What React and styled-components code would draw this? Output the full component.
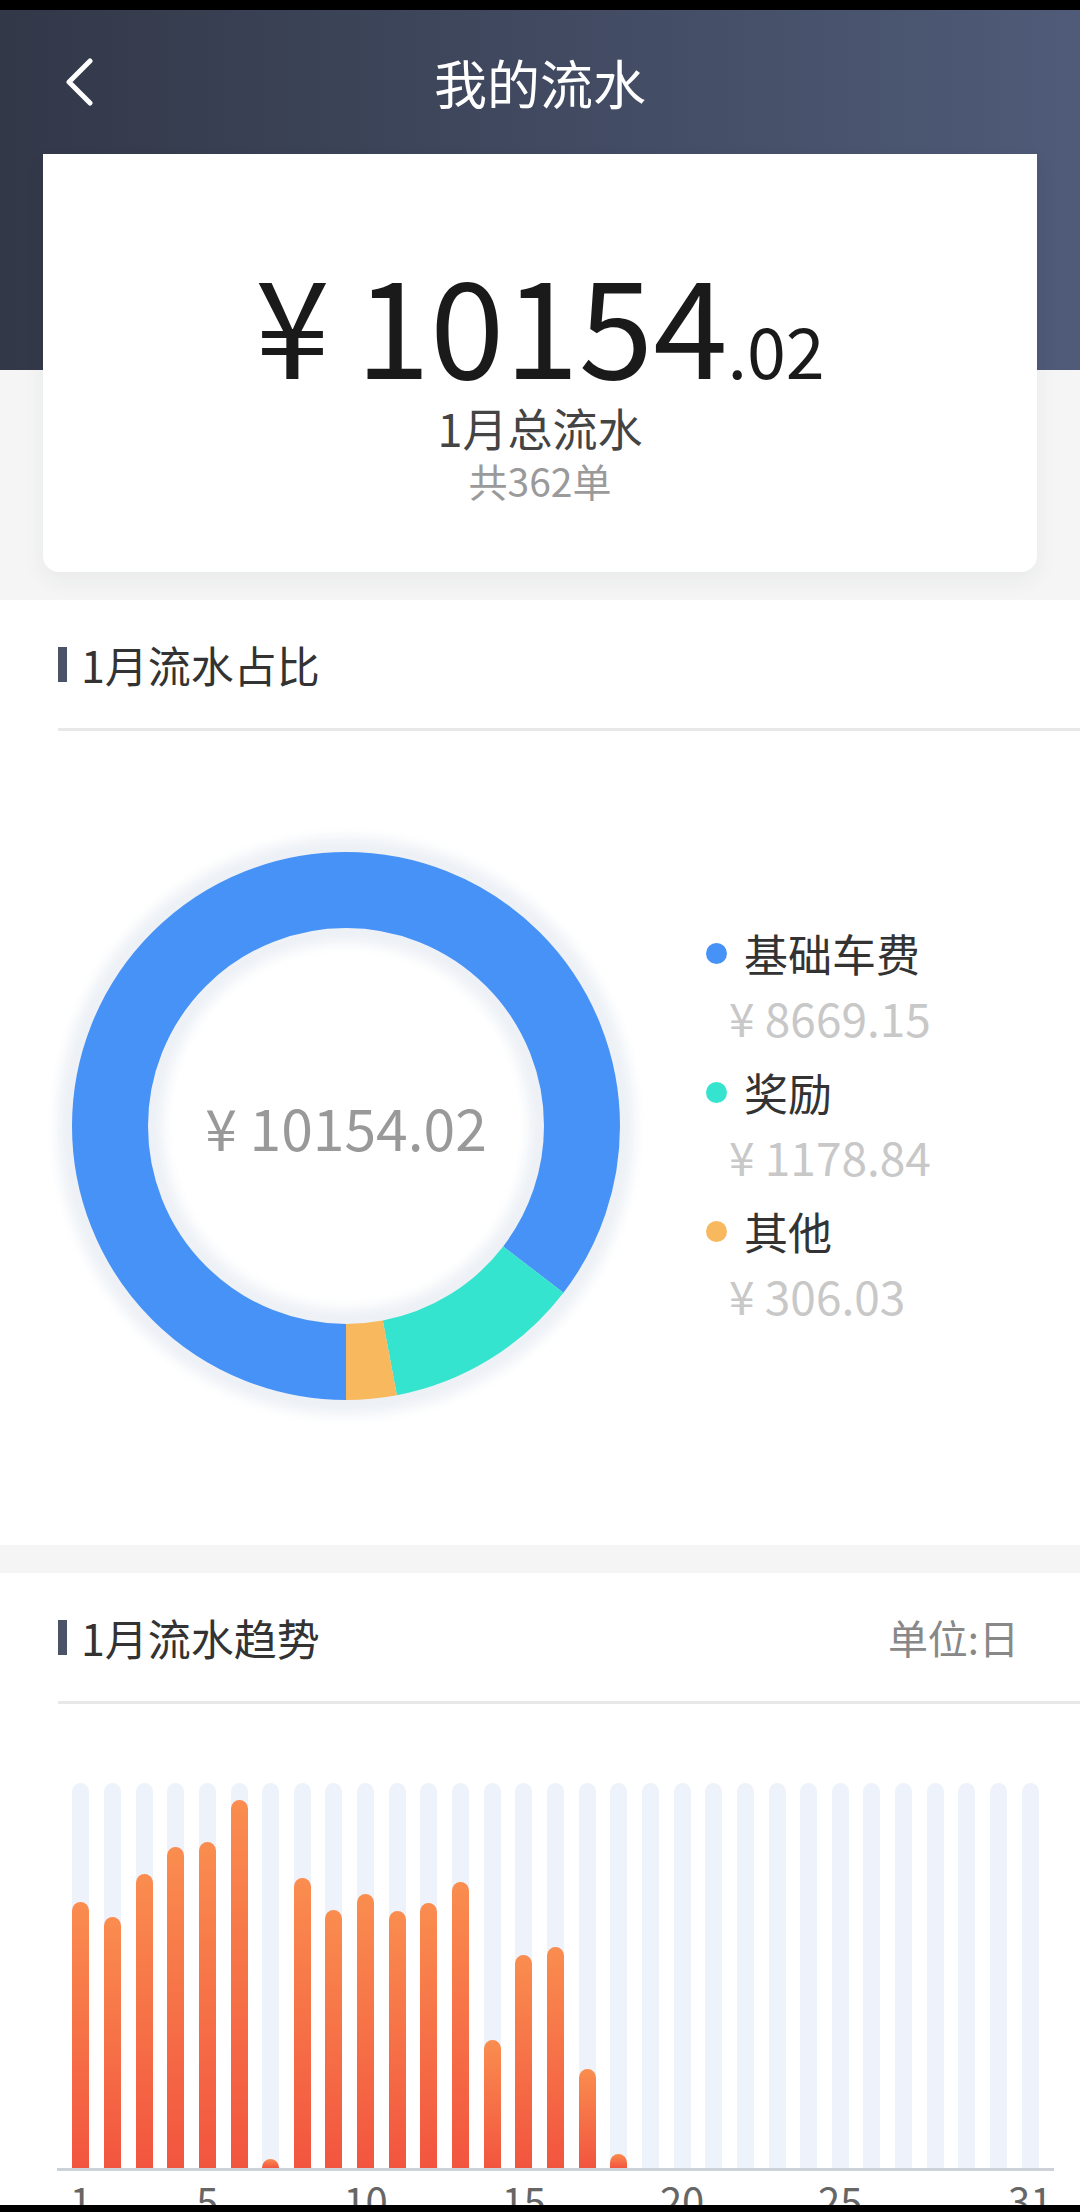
import React from 'react';
import styled, {createGlobalStyle} from 'styled-components';

const GlobalStyle = createGlobalStyle`
	html, body {
		margin: 0;
		padding: 0;
		background: #f5f5f5;
	}
	body {
		font-family: "Noto Sans CJK SC", "Noto Sans", sans-serif;
	}
`;

const Page = styled.div`
	width: 1080px;
	height: 2212px;
	overflow: hidden;
	display: flex;
	flex-direction: column;
	background: #f5f5f5;
`;

const SystemBar = styled.div`
	flex-shrink: 0;
	height: ${props => props.$height}px;
	background: #000;
`;

const Hero = styled.div`
	flex-shrink: 0;
	padding-bottom: 28px;
	background: linear-gradient(90deg, #323848 0%, #4f5b78 100%) top / 100% 360px no-repeat, #f5f5f5;
`;

const NavBar = styled.div`
	height: 144px;
	display: grid;
	grid-template-columns: 160px 1fr 160px;
	align-items: center;
`;

const BackButton = styled.div`
	padding-left: 65px;
	display: flex;
	align-items: center;
`;

const NavTitle = styled.h1`
	margin: 0;
	text-align: center;
	font-size: 53px;
	font-weight: 400;
	line-height: 60px;
	color: #fff;
`;

const SummaryCard = styled.div`
	margin: 0 43px;
	height: 418px;
	box-sizing: border-box;
	padding-top: 97px;
	background: #fff;
	border-radius: 0 0 16px 16px;
	box-shadow: 0 8px 22px rgba(40, 50, 70, 0.06);
	display: flex;
	flex-direction: column;
	align-items: center;
`;

const Amount = styled.div`
	font-size: 134px;
	line-height: 140px;
	height: 140px;
	color: #1a1a1a;
	white-space: nowrap;
`;

const Currency = styled.span`
	margin-right: 26px;
`;

const Decimal = styled.span`
	font-size: 70px;
	line-height: 1;
`;

const CardLabel = styled.div`
	margin-top: 11px;
	font-size: 45px;
	line-height: 52px;
	color: #444;
`;

const CardCount = styled.div`
	font-size: 39px;
	line-height: 52px;
	color: #9a9a9a;
`;

const Section = styled.section`
	flex-shrink: 0;
	height: ${props => props.$height}px;
	margin-top: ${props => props.$gap || 0}px;
	background: #fff;
	overflow: hidden;
`;

const SectionHeader = styled.div`
	margin-left: 58px;
	padding-right: 61px;
	height: 128px;
	display: flex;
	align-items: center;
	justify-content: space-between;
	border-bottom: 3px solid #e8e8e8;
`;

const SectionTitle = styled.h2`
	margin: 0;
	display: flex;
	align-items: center;
	font-size: 43px;
	font-weight: 400;
	line-height: 52px;
	color: #333;

	&::before {
		content: '';
		width: 9px;
		height: 35px;
		margin-right: 14px;
		background: #4a5466;
	}
`;

const Unit = styled.span`
	font-size: 40px;
	color: #888;
`;

const PieBody = styled.div`
	display: flex;
	align-items: center;
	padding: 95px 0 0 46px;
`;

const Donut = styled.div`
	display: grid;
	width: 600px;
	height: 600px;

	& > * {
		grid-area: 1 / 1;
	}
`;

const DonutLabel = styled.div`
	align-self: center;
	justify-self: center;
	font-size: 57px;
	line-height: 80px;
	color: #999;
	white-space: nowrap;
`;

const Legend = styled.ul`
	list-style: none;
	margin: 0 0 0 60px;
	padding: 0;
	display: flex;
	flex-direction: column;
	gap: 11px;
`;

const LegendItem = styled.li`
	display: flex;
	flex-direction: column;
`;

const LegendName = styled.div`
	display: flex;
	align-items: center;
	font-size: 44px;
	line-height: 60px;
	color: #333;

	&::before {
		content: '';
		width: 21px;
		height: 21px;
		border-radius: 50%;
		margin-right: 17px;
		background: ${props => props.$color};
	}
`;

const LegendValue = styled.div`
	padding-left: 23px;
	font-size: 46px;
	line-height: 68px;
	color: #c8c8c8;
`;

const ChartBody = styled.div`
	margin: 79px 26px 0 57px;
`;

const Bars = styled.div`
	height: 385px;
	padding: 0 8px;
	display: grid;
	grid-template-columns: repeat(31, minmax(0, 1fr));
	border-bottom: 3px solid #cdd1d8;
`;

const Track = styled.div`
	justify-self: center;
	width: 17px;
	height: 100%;
	display: flex;
	flex-direction: column;
	justify-content: flex-end;
	overflow: hidden;
	border-radius: 9px 9px 0 0;
	background: #eef3fb;
`;

const Bar = styled.div`
	border-radius: 9px 9px 0 0;
	background: linear-gradient(180deg, #fa8d4f 0%, #f2553f 100%);
`;

const Axis = styled.div`
	margin-top: 5px;
	padding: 0 8px;
	display: grid;
	grid-template-columns: repeat(31, minmax(0, 1fr));
`;

const Tick = styled.div`
	display: flex;
	justify-content: center;
	font-size: 40px;
	line-height: 48px;
	color: #666;
	white-space: nowrap;
`;

const segments = [
	{name: '基础车费', value: 8669.15, color: '#4792f6'},
	{name: '奖励', value: 1178.84, color: '#34e4ce'},
	{name: '其他', value: 306.03, color: '#f7b85e'},
];

const daily = [266, 251, 294, 321, 326, 368, 9, 290, 258, 274, 257, 265, 286, 128, 213, 221, 99, 14,
	0, 0, 0, 0, 0, 0, 0, 0, 0, 0, 0, 0, 0];

const ticks = [1, 5, 10, 15, 20, 25, 31];

function BackIcon() {
	return (
		<svg width="30" height="48" viewBox="0 0 30 48">
			<path d="M25 3 L4 24 L25 45" fill="none" stroke="#fff" strokeWidth="5" strokeLinecap="round" strokeLinejoin="round" />
		</svg>
	);
}

function DonutChart({data}) {
	const total = data.reduce((sum, d) => sum + d.value, 0);
	const r = 236;
	const c = 2 * Math.PI * r;
	let start = 0;

	return (
		<svg width="600" height="600" viewBox="0 0 600 600">
			<defs>
				<filter id="halo" x="-20%" y="-20%" width="140%" height="140%">
					<feGaussianBlur stdDeviation="6" />
				</filter>
			</defs>
			<circle cx="300" cy="300" r={r} fill="none" stroke="#edf1f6" strokeWidth="106" filter="url(#halo)" />
			<g transform="rotate(90 300 300)">
				{data.map(d => {
					const len = (d.value / total) * c;
					const el = (
						<circle
							key={d.name}
							cx="300"
							cy="300"
							r={r}
							fill="none"
							stroke={d.color}
							strokeWidth="76"
							strokeDasharray={`${len} ${c}`}
							strokeDashoffset={-start}
						/>
					);
					start += len;
					return el;
				})}
			</g>
		</svg>
	);
}

export default function App() {
	const max = 385;

	return (
		<Page>
			<GlobalStyle />
			<SystemBar $height={10} />
			<Hero>
				<NavBar>
					<BackButton><BackIcon /></BackButton>
					<NavTitle>我的流水</NavTitle>
					<div />
				</NavBar>
				<SummaryCard>
					<Amount>
						<Currency>¥</Currency>
						10154
						<Decimal>.02</Decimal>
					</Amount>
					<CardLabel>1月总流水</CardLabel>
					<CardCount>共362单</CardCount>
				</SummaryCard>
			</Hero>

			<Section $height={945}>
				<SectionHeader>
					<SectionTitle>1月流水占比</SectionTitle>
				</SectionHeader>
				<PieBody>
					<Donut>
						<DonutChart data={segments} />
						<DonutLabel>¥ 10154.02</DonutLabel>
					</Donut>
					<Legend>
						{segments.map(s => (
							<LegendItem key={s.name}>
								<LegendName $color={s.color}>{s.name}</LegendName>
								<LegendValue>¥ {s.value.toFixed(2)}</LegendValue>
							</LegendItem>
						))}
					</Legend>
				</PieBody>
			</Section>

			<Section $height={632} $gap={28}>
				<SectionHeader>
					<SectionTitle>1月流水趋势</SectionTitle>
					<Unit>单位:日</Unit>
				</SectionHeader>
				<ChartBody>
					<Bars>
						{daily.map((h, i) => (
							<Track key={i}>
								{h > 0 && <Bar style={{height: `${(h / max) * 100}%`}} />}
							</Track>
						))}
					</Bars>
					<Axis>
						{daily.map((_, i) => (
							<Tick key={i}>{ticks.includes(i + 1) ? i + 1 : ''}</Tick>
						))}
					</Axis>
				</ChartBody>
			</Section>
			<SystemBar $height={7} />
		</Page>
	);
}
